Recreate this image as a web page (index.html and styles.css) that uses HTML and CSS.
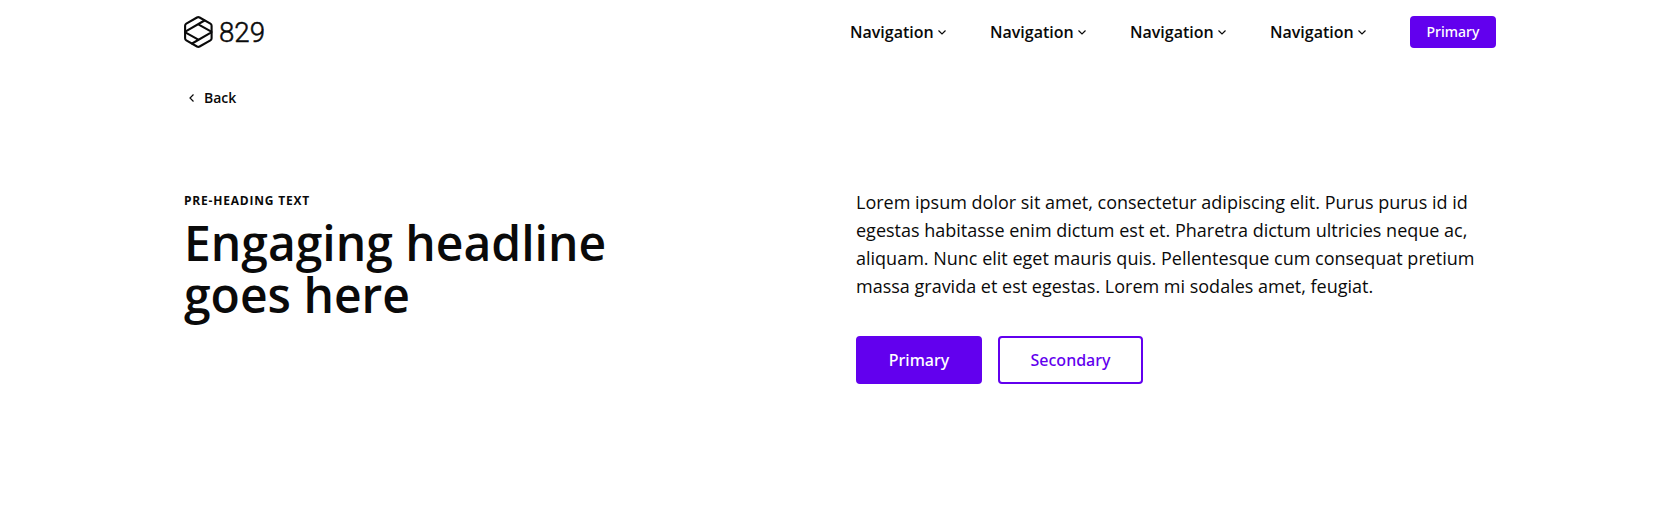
FILE: index.html
```html
<!DOCTYPE html>
<html lang="en">
<head>
<meta charset="utf-8">
<title>829</title>
<link rel="stylesheet" href="styles.css">
</head>
<body>
<header class="header container">
  <a class="logo" aria-label="829">
    <svg class="logo-svg" width="81" height="32" viewBox="0 0 81 32" fill="none">
      <g stroke="#0a0a0a" stroke-width="2.1" stroke-linejoin="round" stroke-linecap="round">
        <path d="M13 1.500Q14.300.8 15.600 1.500L26.400 7.700Q27.600 8.400 27.600 9.800V22.200Q27.600 23.600 26.400 24.300L15.600 30.500Q14.300 31.200 13 30.500L2.300 24.300Q1.100 23.600 1.100 22.200V9.800Q1.100 8.400 2.300 7.700Z"/>
        <path d="M1.300 15.600L20.500 4.500M14.300 8.300L27.300 15.600M27.300 16.400L8.100 27.500M14.300 23.700L1.300 16.400"/>
      </g>
      <text class="logo-text" x="35" y="26" textLength="46" lengthAdjust="spacingAndGlyphs">829</text>
    </svg>
  </a>
  <nav class="nav">
    <a class="nav-link">Navigation<svg class="caret" viewBox="0 0 8 5"><path d="M.5.500L4 4L7.500.500"/></svg></a>
    <a class="nav-link">Navigation<svg class="caret" viewBox="0 0 8 5"><path d="M.5.500L4 4L7.500.500"/></svg></a>
    <a class="nav-link">Navigation<svg class="caret" viewBox="0 0 8 5"><path d="M.5.500L4 4L7.500.500"/></svg></a>
    <a class="nav-link">Navigation<svg class="caret" viewBox="0 0 8 5"><path d="M.5.500L4 4L7.500.500"/></svg></a>
    <a class="btn btn-small btn-primary">Primary</a>
  </nav>
</header>
<main class="container">
  <a class="back"><svg class="back-icon" viewBox="0 0 5 8"><path d="M4.500.500L1 4L4.500 7.500"/></svg>Back</a>
  <section class="hero">
    <div class="hero-title">
      <p class="eyebrow">PRE-HEADING TEXT</p>
      <h1 class="headline">Engaging headline<br>goes here</h1>
    </div>
    <div class="hero-body">
      <p class="copy">Lorem ipsum dolor sit amet, consectetur adipiscing elit. Purus purus id id egestas habitasse enim dictum est et. Pharetra dictum ultricies neque ac, aliquam. Nunc elit eget mauris quis. Pellentesque cum consequat pretium massa gravida et est egestas. Lorem mi sodales amet, feugiat.</p>
      <div class="actions">
        <a class="btn btn-primary btn-wide">Primary</a>
        <a class="btn btn-secondary">Secondary</a>
      </div>
    </div>
  </section>
</main>
</body>
</html>
```
FILE: styles.css
```css
* { box-sizing: border-box; }
body {
  margin: 0;
  background: #fff;
  color: #0a0a0a;
  font-family: "Open Sans", sans-serif;
}
p, h1 { margin: 0; }
.container { width: 1312px; margin: 0 auto; }
.header {
  display: flex;
  align-items: center;
  justify-content: space-between;
  height: 64px;
}
.logo, .logo-svg { display: block; }
.logo-text {
  font: 300 28px "Roboto", sans-serif;
  fill: #0a0a0a;
  stroke: #0a0a0a;
  stroke-width: 0.5px;
}
.nav { display: flex; align-items: center; }
.nav-link {
  display: flex;
  align-items: center;
  gap: 4px;
  width: 140px;
  font-size: 16px;
  font-weight: 600;
  line-height: 24px;
}
.caret { width: 8px; height: 5px; }
.caret, .back-icon { overflow: visible; fill: none; stroke: #0a0a0a; stroke-width: 1.2; }
.btn {
  display: flex;
  align-items: center;
  justify-content: center;
  width: 145px;
  height: 48px;
  border: 2px solid #6200ee;
  border-radius: 4px;
  font-family: "Noto Sans", sans-serif;
  font-size: 16px;
  font-weight: 500;
}
.btn-primary { background: #6200ee; color: #fff; }
.btn-secondary { color: #6200ee; }
.btn-wide { width: 126px; }
.btn-small { width: 86px; height: 32px; padding-bottom: 1px; font-size: 14px; }
.back {
  display: flex;
  align-items: center;
  gap: 10px;
  height: 24px;
  margin-top: 21px;
  padding-left: 5px;
  font-size: 14px;
  font-weight: 600;
}
.back-icon { width: 5px; height: 8px; margin-top: 1px; }
.hero {
  display: grid;
  grid-template-columns: 640px 640px;
  column-gap: 32px;
  padding-top: 79px;
}
.eyebrow {
  margin-top: 4px;
  font-size: 12px;
  font-weight: 700;
  line-height: 18px;
  letter-spacing: 0.8px;
}
.headline {
  margin-top: 7px;
  font-size: 48px;
  font-weight: 600;
  line-height: 52px;
}
.copy { font-size: 18px; line-height: 28px; }
.actions { display: flex; gap: 16px; margin-top: 36px; }
```
